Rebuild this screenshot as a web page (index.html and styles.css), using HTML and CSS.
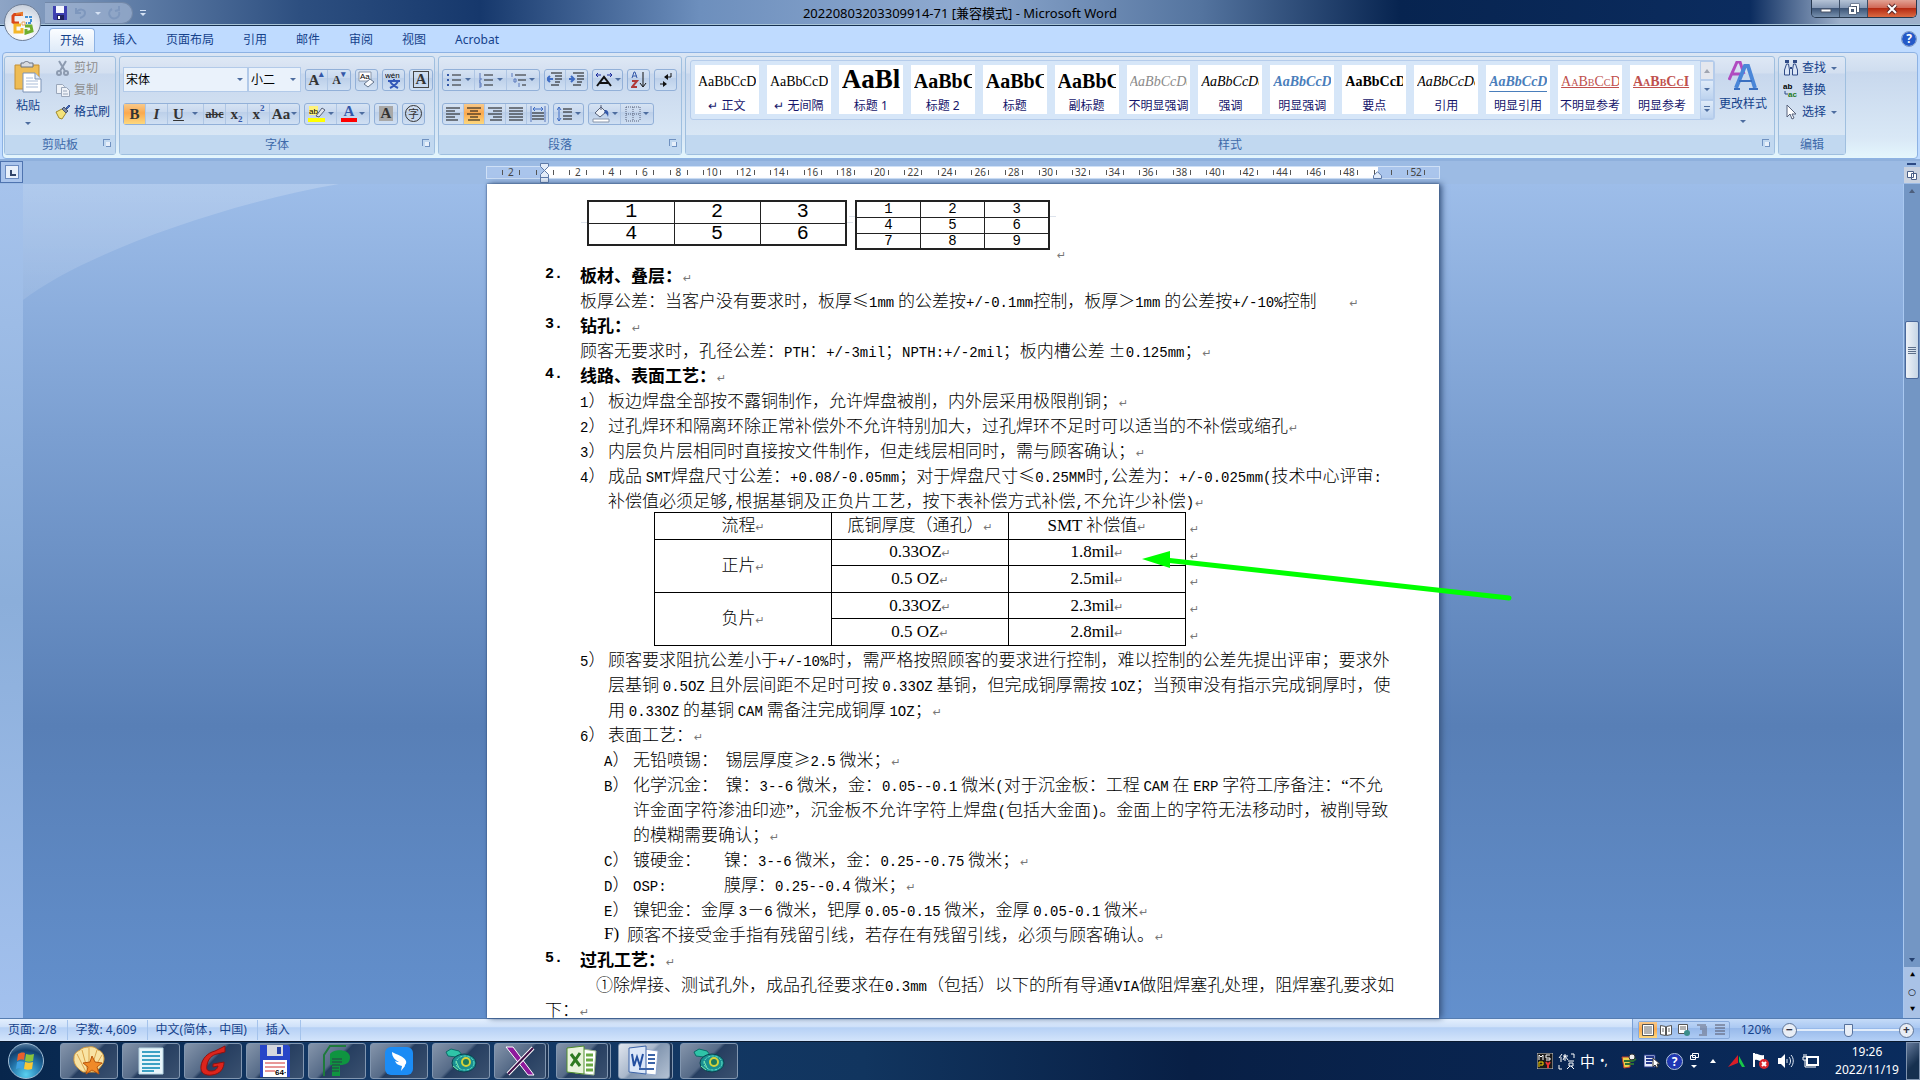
FILE: index.html
```html
<!DOCTYPE html>
<html lang="zh-CN">
<head>
  <meta charset="UTF-8">
  <meta name="viewport" content="width=device-width, initial-scale=1.0">
  <title>20220803203309914-71 [兼容模式] - Microsoft Word</title>
  <link rel="stylesheet" href="styles.css">
</head>
<body>
  <header class="titlebar">
    <div class="quick-access">
      <button class="qat-button" aria-label="保存">
        <svg width="14" height="14" viewBox="0 0 14 14"><path d="M0 0h14v14H1l-1-1z" fill="#3d3fb0"/><path d="M3 0h8v7H3z" fill="#f4f6ff"/><path d="M4 9h7v5H4z" fill="#20225c"/><path d="M5 10h2v3H5z" fill="#fff"/></svg>
      </button>
      <button class="qat-button" aria-label="撤消">
        <svg width="14" height="14" viewBox="0 0 14 14" fill="none" stroke="#7e97bd" stroke-width="2"><path d="M2 2v5h5M2 7c3-5 9-4 9 0 0 3-2 4-5 5"/></svg>
      </button>
      <span class="arrow light"></span>
      <button class="qat-button" aria-label="重复">
        <svg width="14" height="14" viewBox="0 0 14 14" fill="none" stroke="#7e97bd" stroke-width="2"><path d="M4 3a5 5 0 1 0 7 3M7 5l4-1V0"/></svg>
      </button>
    </div>
    <span class="qat-more"><i></i><span class="arrow light"></span></span>
    <h1 class="title">20220803203309914-71 [兼容模式] - Microsoft Word</h1>
    <div class="window-buttons">
      <button class="win-min" aria-label="最小化"><svg width="12" height="12" viewBox="0 0 12 12"><path d="M1 6h10v3H1z" fill="#fff" stroke="#4a5568"/></svg></button>
      <button class="win-max" aria-label="还原"><svg width="12" height="12" viewBox="0 0 12 12" fill="none" stroke="#4a5568" stroke-width="3"><path d="M4 3V2h6v6H9M2 5h5v5H2z"/><path d="M4 3V2h6v6H9M2 5h5v5H2z" stroke="#fff" stroke-width="2"/></svg></button>
      <button class="win-close" aria-label="关闭"><svg width="12" height="12" viewBox="0 0 12 12"><path d="M2 2l8 8M10 2l-8 8" stroke="#5c2a2a" stroke-width="4"/><path d="M2 2l8 8M10 2l-8 8" stroke="#fff" stroke-width="2"/></svg></button>
    </div>
  </header>

  <button class="office-button" aria-label="Office 按钮">
    <svg width="24" height="24" viewBox="0 0 24 24" fill="none" stroke-width="3">
      <path d="M11 3.500H3.500L2 5v6l2 1h4" stroke="#d9471c"/><path d="M5 3l6-1v3" stroke="#e87a2c" stroke-width="2"/>
      <path d="M14 6h6v6h-5" stroke="#3f8fd4" stroke-width="2" stroke-dasharray="3 1"/>
      <path d="M10 14H4v7h7v-4" stroke="#f4b62a"/>
      <path d="M14 15h6l1 5-6 2v-4" stroke="#6fae2d"/>
      <path d="M11 11h3v3h-3z" fill="#fff" stroke="#e9a05a" stroke-width="1"/>
    </svg>
  </button>

  <nav class="tabs">
    <button class="tab active">开始</button>
    <button class="tab">插入</button>
    <button class="tab">页面布局</button>
    <button class="tab">引用</button>
    <button class="tab">邮件</button>
    <button class="tab">审阅</button>
    <button class="tab">视图</button>
    <button class="tab">Acrobat</button>
    <button class="help" aria-label="帮助">?</button>
  </nav>

  <section class="ribbon">
    <div class="group group-clipboard">
      <div class="group-body">
        <button class="big-button">
          <svg width="28" height="32" viewBox="0 0 28 32">
            <path d="M1 4h24v24H1z" fill="#eebc55" stroke="#c48f35"/>
            <path d="M7 2h3c0-2 5-2 5 0h4v4H7z" fill="#d8dbe0" stroke="#6b7280"/>
            <path d="M9 12h12l6 6v13H9z" fill="#fff" stroke="#7d93b5"/><path d="M21 12v6h6" fill="#dfe8f5" stroke="#7d93b5"/>
            <path d="M12 17h7M12 20h12M12 23h12M12 26h12" stroke="#a9bcd8"/>
          </svg>
          <span>粘贴</span>
          <span class="arrow"></span>
        </button>
        <div class="small-list">
          <button class="small-button disabled">
            <svg width="16" height="16" viewBox="0 0 16 16" fill="none" stroke="#8d9bb0" stroke-width="2"><path d="M4 1l6 10M11 1L5 11"/><circle cx="4" cy="13" r="2"/><circle cx="11" cy="13" r="2"/></svg>剪切
          </button>
          <button class="small-button disabled">
            <svg width="16" height="16" viewBox="0 0 16 16" fill="#eef2f8" stroke="#9aa7ba"><path d="M1.500 2.500h6l2 2v7h-8z"/><path d="M6.500 5.500h5l3 3v6h-8zM8 9h4M8 12h5"/></svg>复制
          </button>
          <button class="small-button">
            <svg width="16" height="16" viewBox="0 0 16 16"><path d="M1 8l6-3 4 4-4 6-3-1z" fill="#f3e27a" stroke="#a08a2c"/><path d="M7 5l2-2 4 4-2 2z" fill="#7d8aa5" stroke="#4a5670"/><path d="M11 4l3-3 1 1-3 3z" fill="#4a72c4" stroke="#35549a"/></svg>格式刷
          </button>
        </div>
      </div>
      <div class="group-label">剪贴板<i class="launcher"></i></div>
    </div>

    <div class="group group-font">
      <div class="group-body rows">
        <div class="row">
          <div class="combos">
            <span class="combo combo-font"><select aria-label="字体"><option>宋体</option></select></span>
            <span class="combo combo-size"><select aria-label="字号"><option>小二</option></select></span>
          </div>
          <div class="buttons">
            <button class="tool serif" aria-label="增大字体">A<sup>▴</sup></button>
            <button class="tool serif small" aria-label="缩小字体">A<sup>▾</sup></button>
          </div>
          <div class="buttons">
            <button class="tool" aria-label="清除格式"><svg width="18" height="18" viewBox="0 0 18 18"><path d="M1 1h12v9H1z" fill="#fff" stroke="#8895aa"/><text x="2" y="8" class="icon-text">Aa</text><path d="M6 13l6-5 4 3-6 5z" fill="#f6f8fc" stroke="#64748b"/></svg></button>
          </div>
          <div class="buttons">
            <button class="tool" aria-label="拼音指南"><svg width="18" height="18" viewBox="0 0 18 18"><text x="0" y="7" class="icon-text">wén</text><path d="M3 10h12M9 8v2M5 10c1 3 4 5 8 7M13 10c-1 3-4 5-8 7" fill="none" stroke="#3458b8" stroke-width="2"/></svg></button>
          </div>
          <div class="buttons">
            <button class="tool serif" aria-label="字符边框"><span class="boxed">A</span></button>
          </div>
        </div>
        <div class="row">
          <div class="buttons">
            <button class="tool serif pressed" aria-label="加粗">B</button>
            <button class="tool serif" aria-label="倾斜"><em>I</em></button>
            <button class="tool serif wide" aria-label="下划线"><u>U</u><span class="arrow"></span></button>
            <button class="tool serif small" aria-label="删除线"><s>abc</s></button>
            <button class="tool serif" aria-label="下标">x<sub>2</sub></button>
            <button class="tool serif" aria-label="上标">x<sup>2</sup></button>
            <button class="tool serif medium" aria-label="更改大小写">Aa<span class="arrow"></span></button>
          </div>
          <div class="buttons">
            <button class="tool half" aria-label="突出显示"><svg width="18" height="18" viewBox="0 0 18 18"><path d="M1 1h9v9H1z" fill="#fff27a"/><text x="1" y="9" class="icon-text">ab</text><path d="M8 11l6-8 3 2-6 7z" fill="#dfe4ec" stroke="#56617a"/><path d="M0 13h17v4H0z" fill="#ff0"/></svg><span class="arrow"></span></button>
            <button class="tool serif half" aria-label="字体颜色"><span class="font-color">A</span><span class="arrow"></span></button>
          </div>
          <div class="buttons">
            <button class="tool serif" aria-label="字符底纹"><span class="shaded">A</span></button>
          </div>
          <div class="buttons">
            <button class="tool" aria-label="带圈字符"><span class="circled">字</span></button>
          </div>
        </div>
      </div>
      <div class="group-label">字体<i class="launcher"></i></div>
    </div>

    <div class="group group-paragraph">
      <div class="group-body rows">
        <div class="row">
          <div class="buttons">
            <button class="tool half" aria-label="项目符号"><svg width="16" height="16" viewBox="0 0 16 16"><path d="M5 3h9M5 8h9M5 13h9" stroke="#222"/><path d="M0 2h2v2H0zM0 7h2v2H0zM0 12h2v2H0z" fill="#3458a8"/></svg><span class="arrow"></span></button>
            <button class="tool half" aria-label="编号"><svg width="16" height="16" viewBox="0 0 16 16"><path d="M5 3h9M5 8h9M5 13h9" stroke="#222"/><path d="M1 1v4M0 6h2v2H0v2h2M0 11h2v4H0M0 13h2" stroke="#5a78bc" fill="none"/></svg><span class="arrow"></span></button>
            <button class="tool half" aria-label="多级列表"><svg width="16" height="16" viewBox="0 0 16 16"><path d="M4 3h11M7 8h8M11 13h4" stroke="#222"/><path d="M1 1v4M3 7h2v3H3zM8 11v4" stroke="#5a78bc" fill="none"/></svg><span class="arrow"></span></button>
          </div>
          <div class="buttons">
            <button class="tool" aria-label="减少缩进量"><svg width="16" height="16" viewBox="0 0 16 16"><path d="M4 1h11M8 4h7M8 7h7M8 10h5M4 13h8" stroke="#111"/><path d="M6 7H1M3 4L0 7l3 3" stroke="#3f6cc4" fill="none" stroke-width="2"/></svg></button>
            <button class="tool" aria-label="增加缩进量"><svg width="16" height="16" viewBox="0 0 16 16"><path d="M4 1h11M8 4h7M8 7h7M8 10h5M4 13h8" stroke="#111"/><path d="M0 7h4M2 4l3 3-3 3" stroke="#3f6cc4" fill="none" stroke-width="2"/></svg></button>
          </div>
          <div class="buttons">
            <button class="tool asian" aria-label="中文版式"><svg width="18" height="16" viewBox="0 0 18 16"><path d="M2 14L9 5l7 9M5 11h8" stroke="#111" stroke-width="2" fill="none"/><path d="M1 3h5M3 1L1 3l2 2M12 3h5M15 1l2 2-2 2" stroke="#1a2a9c" fill="none"/></svg><span class="arrow"></span></button>
          </div>
          <div class="buttons">
            <button class="tool" aria-label="排序"><svg width="16" height="18" viewBox="0 0 16 18"><path d="M1 7l2-6h1l2 6M2 5h4" stroke="#3458a8" fill="none"/><path d="M1 10h5l-5 6h5" stroke="#b03a3a" fill="none" stroke-width="2"/><path d="M12 1v14M9 12l3 4 3-4" stroke="#111" fill="none"/></svg></button>
          </div>
          <div class="buttons">
            <button class="tool" aria-label="显示编辑标记"><svg width="16" height="16" viewBox="0 0 16 16"><path d="M13 1v4H7" stroke="#111" fill="none"/><path d="M10 2v6L6 5zM5 9v6l4-3z" fill="#111"/><path d="M2 12h4" stroke="#111"/></svg></button>
          </div>
        </div>
        <div class="row">
          <div class="buttons">
            <button class="tool" aria-label="左对齐"><svg width="16" height="16" viewBox="0 0 16 16"><path d="M1 2h14M1 5h9M1 8h14M1 11h9M1 14h12" stroke="#111"/></svg></button>
            <button class="tool pressed" aria-label="居中"><svg width="16" height="16" viewBox="0 0 16 16"><path d="M1 2h14M4 5h8M1 8h14M4 11h8M2 14h12" stroke="#111"/></svg></button>
            <button class="tool" aria-label="右对齐"><svg width="16" height="16" viewBox="0 0 16 16"><path d="M1 2h14M6 5h9M1 8h14M6 11h9M3 14h12" stroke="#111"/></svg></button>
            <button class="tool" aria-label="两端对齐"><svg width="16" height="16" viewBox="0 0 16 16"><path d="M1 2h14M1 5h14M1 8h14M1 11h14M1 14h14" stroke="#111"/></svg></button>
            <button class="tool" aria-label="分散对齐"><svg width="16" height="16" viewBox="0 0 16 16"><path d="M1 0v16M15 0v16" stroke="#5a78bc"/><path d="M3 3h10M5 1L3 3l2 2M11 1l2 2-2 2" stroke="#3f6cc4" fill="none"/><path d="M2 7h12M2 10h12M2 13h12" stroke="#111"/></svg></button>
          </div>
          <div class="buttons">
            <button class="tool asian" aria-label="行距"><svg width="16" height="16" viewBox="0 0 16 16"><path d="M6 3h9M6 6h9M6 10h9M6 13h9" stroke="#111"/><path d="M2 1v14M0 4l2-3 2 3M0 12l2 3 2-3" stroke="#3f6cc4" fill="none"/></svg><span class="arrow"></span></button>
          </div>
          <div class="buttons">
            <button class="tool half" aria-label="底纹"><svg width="18" height="18" viewBox="0 0 18 18"><path d="M3 8l6-6 5 5-6 5z" fill="#eef2f8" stroke="#56617a"/><path d="M9 5V0" stroke="#56617a"/><path d="M13 5c3 0 4 2 3 7-1-3-2-4-4-4z" fill="#3458a8"/><path d="M1 14h16v3H1z" fill="#fff" stroke="#8895aa"/></svg><span class="arrow"></span></button>
            <button class="tool half" aria-label="边框"><svg width="16" height="16" viewBox="0 0 16 16"><path d="M1 1h14M1 8h14M1 1v14M8 1v14M15 1v14M1 15h14" stroke="#56617a" stroke-dasharray="1 1" fill="none"/></svg><span class="arrow"></span></button>
          </div>
        </div>
      </div>
      <div class="group-label">段落<i class="launcher"></i></div>
    </div>

    <div class="group group-styles">
      <div class="group-body styles-body">
        <div class="gallery">
          <button class="style"><span class="sample">AaBbCcDd</span><span>↵ 正文</span></button>
          <button class="style"><span class="sample">AaBbCcDd</span><span>↵ 无间隔</span></button>
          <button class="style"><span class="sample huge">AaBl</span><span>标题 1</span></button>
          <button class="style"><span class="sample large">AaBbC</span><span>标题 2</span></button>
          <button class="style"><span class="sample large">AaBbC</span><span>标题</span></button>
          <button class="style"><span class="sample large">AaBbC</span><span>副标题</span></button>
          <button class="style"><span class="sample italic gray">AaBbCcDd</span><span>不明显强调</span></button>
          <button class="style"><span class="sample italic">AaBbCcDd</span><span>强调</span></button>
          <button class="style"><span class="sample italic bold blue">AaBbCcDd</span><span>明显强调</span></button>
          <button class="style"><span class="sample bold">AaBbCcD</span><span>要点</span></button>
          <button class="style"><span class="sample italic">AaBbCcDd</span><span>引用</span></button>
          <button class="style"><span class="sample italic bold blue ruled">AaBbCcDd</span><span>明显引用</span></button>
          <button class="style"><span class="sample red caps">AaBbCcDd</span><span>不明显参考</span></button>
          <button class="style"><span class="sample red caps bold">AaBbCcI</span><span>明显参考</span></button>
          <div class="gallery-scroll">
            <button class="off" aria-label="向上"><span class="arrow up"></span></button>
            <button aria-label="向下"><span class="arrow"></span></button>
            <button aria-label="其他"><i></i><span class="arrow"></span></button>
          </div>
        </div>
        <button class="big-button change-styles">
          <svg width="30" height="30" viewBox="0 0 30 30">
            <path d="M1 19L9 1h3l4 12M4 13h8" fill="none" stroke="#b04cc0" stroke-width="3"/>
            <path d="M8 27L17 5h3l7 22" fill="none" stroke="#4a86d8" stroke-width="4"/><path d="M11 20h13M6 28h6M21 28h9" stroke="#3a6fc0" stroke-width="2"/>
          </svg>
          <span>更改样式</span>
          <span class="arrow"></span>
        </button>
      </div>
      <div class="group-label">样式<i class="launcher"></i></div>
    </div>

    <div class="group group-edit">
      <div class="group-body">
        <div class="small-list">
          <button class="small-button">
            <svg width="16" height="16" viewBox="0 0 16 16" fill="#dbe6f7" stroke="#2f4a86"><path d="M1.500 15v-5l2-6h2l1 6v5zM9.500 15v-5l1-6h2l2 6v5z"/><path d="M3 3V1h2v2M11 3V1h2v2M7 8h2" fill="none" stroke-width="2"/></svg>查找<span class="arrow"></span>
          </button>
          <button class="small-button">
            <svg width="16" height="16" viewBox="0 0 16 16"><text x="0" y="7" class="icon-text strong">ab</text><text x="5" y="15" class="icon-text strong green">ac</text><path d="M2 9v3h3" fill="none" stroke="#2f4a86"/></svg>替换
          </button>
          <button class="small-button">
            <svg width="16" height="16" viewBox="0 0 16 16"><path d="M4 1v12l3-3 2 5 2-1-2-4h4z" fill="#fff" stroke="#56617a"/></svg>选择<span class="arrow"></span>
          </button>
        </div>
      </div>
      <div class="group-label">编辑</div>
    </div>
  </section>

  <div class="ruler-row">
    <button class="tab-stop" aria-label="制表符"><i></i></button>
    <div class="ruler">
      <span>2</span><span></span><span>2</span><span>4</span><span>6</span><span>8</span><span>10</span><span>12</span><span>14</span><span>16</span><span>18</span><span>20</span><span>22</span><span>24</span><span>26</span><span>28</span><span>30</span><span>32</span><span>34</span><span>36</span><span>38</span><span>40</span><span>42</span><span>44</span><span>46</span><span>48</span><span></span><span>52</span>
      <svg class="indent-left" width="11" height="20" viewBox="0 0 11 20" fill="#e4edf9" stroke="#5f7ba8"><path d="M1.500.5h8v3l-4 4-4-4zM5.500 7.500l4 4v3h-8v-3zM1.500 14.500h8v5h-8z"/></svg>
      <svg class="indent-right" width="11" height="8" viewBox="0 0 11 8" fill="#e4edf9" stroke="#5f7ba8"><path d="M5.500.7l4 4v2.800h-8V4.700z"/></svg>
    </div>
    <div class="ruler-end"><i></i><button aria-label="标尺"><svg width="12" height="12" viewBox="0 0 12 12" fill="#fff" stroke="#4a5f86"><path d="M1.500 2.500h6v6h-6zM5.500 4.500h5v6h-5z"/></svg></button></div>
  </div>

  <main class="workspace">
    <div class="side-ruler"></div>
    <div class="canvas">
      <article class="page">
        <div class="figures">
          <div class="figure figure-large">
            <table>
              <tr><td>1</td><td>2</td><td>3</td></tr>
              <tr><td>4</td><td>5</td><td>6</td></tr>
            </table>
          </div>
          <div class="figure figure-small">
            <table>
              <tr><td>1</td><td>2</td><td>3</td></tr>
              <tr><td>4</td><td>5</td><td>6</td></tr>
              <tr><td>7</td><td>8</td><td>9</td></tr>
            </table>
          </div>
          <span class="mark"></span>
        </div>

        <h2 class="heading"><b>2.</b><span class="mark">板材、叠层：</span></h2>
        <p class="body-text mark">板厚公差：当客户没有要求时，板厚≤<code>1mm</code> 的公差按<code>+/-0.1mm</code>控制，板厚＞<code>1mm</code> 的公差按<code>+/-10%</code>控制<span class="tab-gap"></span></p>
        <h2 class="heading"><b>3.</b><span class="mark">钻孔：</span></h2>
        <p class="body-text mark">顾客无要求时，孔径公差：<code>PTH</code>：<code>+/-3mil</code>；<code>NPTH:+/-2mil</code>；板内槽公差 ±<code>0.125mm</code>；</p>
        <h2 class="heading"><b>4.</b><span class="mark">线路、表面工艺：</span></h2>
        <div class="item"><b><code>1</code>）</b><p class="mark">板边焊盘全部按不露铜制作，允许焊盘被削，内外层采用极限削铜；</p></div>
        <div class="item"><b><code>2</code>）</b><p class="mark">过孔焊环和隔离环除正常补偿外不允许特别加大，过孔焊环不足时可以适当的不补偿或缩孔</p></div>
        <div class="item"><b><code>3</code>）</b><p class="mark">内层负片层相同时直接按文件制作，但走线层相同时，需与顾客确认；</p></div>
        <div class="item"><b><code>4</code>）</b><p class="mark"><span class="full">成品 <code>SMT</code>焊盘尺寸公差：<code>+0.08/-0.05mm</code>；对于焊盘尺寸≤<code>0.25MM</code>时<code>,</code>公差为：<code>+/-0.025mm(</code>技术中心评审<code>:</code></span>补偿值必须足够<code>,</code>根据基铜及正负片工艺，按下表补偿方式补偿<code>,</code>不允许少补偿<code>)</code></p></div>

        <div class="spec">
          <table>
            <tr><td><span class="mark">流程</span></td><td><span class="mark">底铜厚度（通孔）</span></td><td><span class="mark">SMT 补偿值</span></td></tr>
            <tr><td rowspan="2"><span class="mark">正片</span></td><td><span class="mark">0.33OZ</span></td><td><span class="mark">1.8mil</span></td></tr>
            <tr><td><span class="mark">0.5 OZ</span></td><td><span class="mark">2.5mil</span></td></tr>
            <tr><td rowspan="2"><span class="mark">负片</span></td><td><span class="mark">0.33OZ</span></td><td><span class="mark">2.3mil</span></td></tr>
            <tr><td><span class="mark">0.5 OZ</span></td><td><span class="mark">2.8mil</span></td></tr>
          </table>
          <div class="row-marks"><i class="mark"></i><i class="mark"></i><i class="mark"></i><i class="mark"></i><i class="mark"></i></div>
        </div>

        <div class="item"><b><code>5</code>）</b><p class="mark"><span class="full">顾客要求阻抗公差小于<code>+/-10%</code>时，需严格按照顾客的要求进行控制，难以控制的公差先提出评审；要求外</span><span class="full">层基铜 <code>0.5OZ</code> 且外层间距不足时可按 <code>0.33OZ</code> 基铜，但完成铜厚需按 <code>1OZ</code>；当预审没有指示完成铜厚时，使</span>用 <code>0.33OZ</code> 的基铜 <code>CAM</code> 需备注完成铜厚 <code>1OZ</code>；</p></div>
        <div class="item"><b><code>6</code>）</b><p class="mark">表面工艺：</p></div>
        <div class="item sub"><b><code>A</code>）</b><p class="mark">无铅喷锡：&nbsp; 锡层厚度≥<code>2.5</code> 微米；</p></div>
        <div class="item sub"><b><code>B</code>）</b><p class="mark"><span class="full">化学沉金：&nbsp; 镍：<code>3--6</code> 微米，金：<code>0.05--0.1</code> 微米<code>(</code>对于沉金板：工程 <code>CAM</code> 在 <code>ERP</code> 字符工序备注：<q>“</q>不允</span><span class="full">许金面字符渗油印迹<q>”</q>，沉金板不允许字符上焊盘<code>(</code>包括大金面<code>)</code>。金面上的字符无法移动时，被削导致</span>的模糊需要确认；</p></div>
        <div class="item sub"><b><code>C</code>）</b><p class="mark"><span class="term">镀硬金：</span>镍：<code>3--6</code> 微米，金：<code>0.25--0.75</code> 微米；</p></div>
        <div class="item sub"><b><code>D</code>）</b><p class="mark"><span class="term"><code>OSP:</code></span>膜厚：<code>0.25--0.4</code> 微米；</p></div>
        <div class="item sub"><b><code>E</code>）</b><p class="mark">镍钯金：金厚 <code>3</code>－<code>6</code> 微米，钯厚 <code>0.05-0.15</code> 微米，金厚 <code>0.05-0.1</code> 微米</p></div>
        <div class="item sub last"><b>F)</b><p class="mark">顾客不接受金手指有残留引线，若存在有残留引线，必须与顾客确认。</p></div>
        <h2 class="heading"><b>5.</b><span class="mark">过孔工艺：</span></h2>
        <p class="mark"><span class="full closing">①除焊接、测试孔外，成品孔径要求在<code>0.3mm</code>（包括）以下的所有导通<code>VIA</code>做阻焊塞孔处理，阻焊塞孔要求如</span>下：</p>
      </article>
    </div>
    <div class="scrollbar">
      <span class="arrow up"></span>
      <div class="track"><div class="thumb"><i></i></div></div>
      <span class="arrow dark"></span>
      <button aria-label="上一页">⯅</button>
      <button aria-label="选择浏览对象">○</button>
      <button aria-label="下一页">⯆</button>
    </div>
    <svg class="callout" width="372" height="54" viewBox="0 0 372 54">
      <path d="M24 10L368 48" stroke="#0f0" stroke-width="5" stroke-linecap="round"/>
      <path d="M1 9L29 1v17z" fill="#0f0"/>
    </svg>
  </main>

  <footer class="statusbar">
    <span class="status-item">页面: 2/8</span>
    <span class="status-item">字数: 4,609</span>
    <span class="status-item">中文(简体，中国)</span>
    <span class="status-item">插入</span>
    <div class="view-controls">
      <div class="views">
        <button class="pressed" aria-label="页面视图"><svg width="12" height="12" viewBox="0 0 12 12"><path d="M.5.5h11v11H.5z" fill="#fff" stroke="#555"/><path d="M2 3h8M2 5h8M2 7h8M2 9h8" stroke="#666"/></svg></button>
        <button aria-label="阅读版式"><svg width="12" height="12" viewBox="0 0 12 12"><path d="M.5 1.500l5 1v9l-5-1zM11.500 1.500l-5 1v9l5-1z" fill="#fff" stroke="#555"/><path d="M2 5h2M2 7h2M8 5h2M8 7h2" stroke="#666"/></svg></button>
        <button aria-label="Web 版式"><svg width="12" height="12" viewBox="0 0 12 12"><path d="M.5.5h9v9h-9z" fill="#fff" stroke="#555"/><path d="M2 3h6M2 5h6" stroke="#666"/><circle cx="9" cy="9" r="3" fill="#3c8d8a"/></svg></button>
        <button aria-label="大纲视图"><svg width="12" height="12" viewBox="0 0 12 12"><path d="M1 1h9M4 3h7M4 5h7M6 7h5M6 9h5M3 11h8" stroke="#667"/></svg></button>
        <button aria-label="普通视图"><svg width="12" height="12" viewBox="0 0 12 12"><path d="M1 1h10M1 4h10M1 7h10M1 10h10" stroke="#556"/></svg></button>
      </div>
      <span class="zoom-level">120%</span>
      <button class="zoom-button" aria-label="缩小">−</button>
      <input class="zoom-slider" type="range" min="0" max="100" value="50" aria-label="显示比例">
      <button class="zoom-button" aria-label="放大">+</button>
    </div>
  </footer>

  <div class="taskbar">
    <button class="start" aria-label="开始">
      <svg width="22" height="22" viewBox="0 0 22 22"><path d="M3 4c2-1 4-2 7-1l-1 7c-3-1-5 0-7 1z" fill="#e8602c"/><path d="M11 4c3 1 5 1 8 0l-1 7c-3 1-5 1-8 0z" fill="#8ac43c"/><path d="M2 12c2-1 4-1 7 0l-1 7c-3-1-5-1-7 0z" fill="#3fa0e0"/><path d="M10 12c3 1 5 1 8 0l-1 7c-3 1-5 1-8 0z" fill="#fbc734"/></svg>
    </button>
    <button class="task" aria-label="Shell">
      <svg width="34" height="30" viewBox="0 0 34 30"><path d="M17 1c4-1 7 1 9 3 4 1 6 5 6 9 0 5-5 10-9 13H11C6 23 1 18 2 12c0-4 2-6 6-8 2-2 5-3 9-3z" fill="#f8e3a4" stroke="#d49a3c"/><path d="M14 26L5 8M16 26L10 4M17 26V2M18 26l7-22M20 26L30 9" stroke="#dba44c" fill="none"/><path d="M20 10l3 6 7 1-5 4 2 7-7-4-6 4 2-7-5-4 7-1z" fill="#f08a28" stroke="#b8560c"/></svg>
    </button>
    <button class="task" aria-label="文本">
      <svg width="26" height="30" viewBox="0 0 26 30"><path d="M1 2h24v26H1z" fill="#e8f5fb" stroke="#b7d5e2"/><path d="M4 6h18M4 10h18M4 14h18M4 18h18M4 22h18M4 25h12" stroke="#3ea1c4" stroke-width="2"/></svg>
    </button>
    <button class="task" aria-label="Genesis">
      <svg width="28" height="32" viewBox="0 0 28 32"><path d="M26 1L16 6C8 8 3 14 2 21c-1 7 4 10 11 9 8-1 12-6 12-13l-11 2v3l5-1c-1 4-4 5-7 5-4 0-5-2-4-6 1-6 5-10 10-11l8-2z" fill="#dc241c" stroke="#8e1210"/></svg>
    </button>
    <button class="task" aria-label="Disk">
      <svg width="30" height="32" viewBox="0 0 30 32"><path d="M0 0h28l2 2v30H0z" fill="#2746c8"/><path d="M7 0h16v11H7z" fill="#d5d8de"/><path d="M17 2h4v7h-4z" fill="#2340a8"/><path d="M3 15h24v17H3z" fill="#fff"/><path d="M5 18h20M5 22h20M5 26h10" stroke="#d03030"/><text x="15" y="30" class="icon-text strong">64·</text></svg>
    </button>
    <button class="task" aria-label="P">
      <svg width="32" height="32" viewBox="0 0 32 32"><path d="M3 31V10L9 1h16" fill="none" stroke="#1e7a3c" stroke-width="2"/><path d="M9 9c3-5 19-6 20 3 0 6-4 8-10 8v11h-8V20H9z" fill="#0f9440"/><path d="M11 14h10M11 17h10M11 20h8M11 23h7M11 26h7" stroke="#2a3c48"/></svg>
    </button>
    <button class="task" aria-label="钉钉">
      <svg width="28" height="28" viewBox="0 0 28 28"><rect width="28" height="28" rx="6" fill="#1b8cf5"/><path d="M7 5c5 3 12 4 14 9 1 3-2 4-1 5l-4 5 1-5c-5-1-6-3-7-5 2 1 3 1 4 1-4-2-7-5-7-10z" fill="#fff"/></svg>
    </button>
    <button class="task" aria-label="Eye">
      <svg width="32" height="26" viewBox="0 0 32 26"><path d="M1 4l5-3 8 2 3 4-6 2-8-1z" fill="#2fc4a8" stroke="#0d6b68"/><ellipse cx="19" cy="15" rx="12" ry="9" fill="#1a8f90" stroke="#0b4450"/><ellipse cx="20" cy="15" rx="9" ry="7" fill="none" stroke="#5fe0c8" stroke-dasharray="3 1"/><circle cx="21" cy="14" r="4" fill="#1c7a5c" stroke="#d4d23a" stroke-width="2"/><path d="M8 18l5 4M11 13l3 7" stroke="#7fe8a8"/></svg>
    </button>
    <button class="task stacked" aria-label="X">
      <svg width="30" height="30" viewBox="0 0 30 30"><path d="M1 1h7l21 28h-6z" fill="#8e1a9c" stroke="#fff"/><path d="M28 2L3 28" stroke="#fff" stroke-width="4"/><path d="M28 2L3 28" stroke="#401048" stroke-width="2"/></svg>
    </button>
    <button class="task stacked" aria-label="Excel">
      <svg width="32" height="32" viewBox="0 0 32 32"><path d="M10 3l20 3-2 24-19-2z" fill="#fff" stroke="#9ab88c"/><path d="M1 3l17-2v28L1 27z" fill="#e8f3dc" stroke="#4e8c2c"/><path d="M5 9l9 12M14 8L5 21" stroke="#2e7a22" stroke-width="3"/><path d="M20 10h7M20 15h7M20 20h7M20 25h7" stroke="#6aaa44" stroke-width="3"/></svg>
    </button>
    <button class="task stacked current" aria-label="Word">
      <svg width="32" height="32" viewBox="0 0 32 32"><path d="M10 3l20 3-2 24-19-2z" fill="#fff" stroke="#93a8cc"/><path d="M1 3l17-2v28L1 27z" fill="#dbe7f8" stroke="#3c64a8"/><path d="M4 9l2 12 3-9 3 9 3-12" fill="none" stroke="#2450a0" stroke-width="2"/><path d="M20 10h7M20 14h7M20 18h7M11 24h15" stroke="#3c64a8" stroke-width="2"/></svg>
    </button>
    <button class="task" aria-label="Eye 2">
      <svg width="32" height="26" viewBox="0 0 32 26"><path d="M1 4l5-3 8 2 3 4-6 2-8-1z" fill="#2fc4a8" stroke="#0d6b68"/><ellipse cx="19" cy="15" rx="12" ry="9" fill="#1a8f90" stroke="#0b4450"/><ellipse cx="20" cy="15" rx="9" ry="7" fill="none" stroke="#5fe0c8" stroke-dasharray="3 1"/><circle cx="21" cy="14" r="4" fill="#1c7a5c" stroke="#d4d23a" stroke-width="2"/><path d="M8 18l5 4M11 13l3 7" stroke="#7fe8a8"/></svg>
    </button>

    <div class="tray">
      <div class="ime-bar">
        <svg width="16" height="16" viewBox="0 0 16 16"><path d="M0 0h16v16H0z" fill="#1a1a1a" stroke="#ccc"/><path d="M2 7V2l2 2 2-2v5M13 2H9v3h4v2H9" stroke="#fff" fill="none"/><path d="M2 14V9h4v3H3" stroke="#ffd800" fill="none"/><path d="M9 9l2 3 2-3M11 12v3" stroke="#e33" fill="none" stroke-width="2"/></svg>
        <svg width="17" height="17" viewBox="0 0 17 17" fill="none" stroke="#fff"><path d="M4 1L1 5M3 4v5M5 3h5M7 1v7M7 3L5 7M7 3l3 4M1 12v4h3M16 5V1h-3M10 8h6M11 10h4v3h-4zM9 16l3-3M16 16l-3-3"/></svg>
        <span class="ime">中</span>
        <span class="ime-dots">•,</span>
      </div>
      <svg width="16" height="16" viewBox="0 0 16 16"><path d="M1 4h8v10l-6 1z" fill="#e8d24a" stroke="#c23c2c"/><circle cx="11" cy="4" r="3" fill="#eee" stroke="#333"/><path d="M3 8h9l3-2M4 11h9" stroke="#2c6d34" stroke-width="2"/></svg>
      <svg width="16" height="16" viewBox="0 0 16 16"><path d="M0 2h11v12H0z" fill="#e8edf8" stroke="#24388c"/><path d="M2 4h8M2 7h8M2 10h6" stroke="#24388c" stroke-width="2"/><path d="M9 5v9l2-2 2 3 1-1-1-3h3z" fill="#fff" stroke="#333"/></svg>
      <span class="tray-help">?</span>
      <svg width="10" height="18" viewBox="0 0 10 18"><path d="M3.500 1.500h6v4h-6zM1.500 3.500h5v4h-5z" fill="none" stroke="#fff"/><path d="M2 13h6l-3 3z" fill="#fff"/></svg>
      <span class="arrow up white"></span>
      <svg width="18" height="14" viewBox="0 0 18 14"><path d="M1 13L11 1v8z" fill="#d81e28"/><path d="M12 2l6 11h-3l-3-5z" fill="#18c848"/></svg>
      <svg width="18" height="18" viewBox="0 0 18 18"><path d="M2 1v14" stroke="#fff" stroke-width="2"/><path d="M3 2c3-1 4 2 9 1v6c-5 1-6-2-9-1z" fill="#fff"/><circle cx="12" cy="12" r="5" fill="#d8262c"/><path d="M10 10l4 4M14 10l-4 4" stroke="#fff" stroke-width="2"/></svg>
      <svg width="18" height="16" viewBox="0 0 18 16"><path d="M1 5h3l4-4v14l-4-4H1z" fill="#fff"/><path d="M10 6v4M12 4c2 2 2 6 0 8M14 2c3 3 3 9 0 12" stroke="#dde6f2" fill="none"/></svg>
      <svg width="18" height="16" viewBox="0 0 18 16" fill="none" stroke="#fff"><path d="M5 4h11v8H5z" stroke-width="2"/><path d="M8 14h6M2 1v3M4 1v3M1 4h4v3H1zM3 7v7h5"/></svg>
      <div class="clock"><span>19:26</span><span>2022/11/19</span></div>
      <button class="show-desktop" aria-label="显示桌面"></button>
    </div>
  </div>
</body>
</html>
```

FILE: styles.css
```css
* {
  box-sizing: border-box;
}

body {
  display: flex;
  flex-direction: column;
  height: 100vh;
  margin: 0;
  overflow: hidden;
  background: #bfdbff;
  color: #15428b;
  font-family: "Noto Sans", "Noto Sans CJK SC", sans-serif;
  font-size: 12px;
  line-height: 16px;
}

button {
  margin: 0;
  padding: 0;
  border: none;
  background: none;
  color: inherit;
  font: inherit;
}

svg {
  flex: none;
}

.arrow {
  flex: none;
  width: 0;
  height: 0;
  border: 3px solid transparent;
  border-top-color: #4d6d9f;
  border-bottom: none;
}

.arrow.up {
  border-top: none;
  border-bottom: 4px solid #4d5f7d;
}

.arrow.light {
  border-top-color: #d5e2f4;
}

.arrow.white {
  border-bottom-color: #fff;
}

/* title bar */
.titlebar {
  display: flex;
  flex: none;
  height: 26px;
  border-bottom: 1px solid #16304f;
  background: linear-gradient(90deg, #8ea5c6 0, #5d7ba5 140px, #2d4f80 300px, #16386c 480px, #6d8fbd 700px, #8faad0 960px, #54749f 1200px, #072450 1400px, #0b2c5f 1750px, #9db0cb 1840px);
  box-shadow: inset 0 -1px #a8c4d8;
}

.quick-access {
  display: flex;
  align-items: center;
  gap: 7px;
  width: 88px;
  height: 22px;
  margin: 2px 0 0 45px;
  padding-left: 8px;
  border: 1px solid #7288a8;
  border-left: none;
  border-radius: 0 11px 11px 0;
  background: rgba(170, 188, 216, 0.6);
}

.qat-button {
  display: flex;
}

.qat-more {
  display: flex;
  flex-direction: column;
  align-items: center;
  justify-content: center;
  gap: 2px;
  width: 20px;
}

.qat-more i {
  width: 6px;
  height: 1px;
  background: #d5e2f4;
}

.title {
  flex: 1;
  margin: 0;
  padding-right: 44px;
  color: #000;
  font-size: 13px;
  font-weight: 400;
  line-height: 26px;
  text-align: center;
}

.window-buttons {
  display: flex;
  height: 18px;
  margin-right: 3px;
  border: 1px solid #26384f;
  border-top: none;
  border-radius: 0 0 5px 5px;
  overflow: hidden;
}

.window-buttons button {
  display: flex;
  align-items: center;
  justify-content: center;
  width: 28px;
  border-right: 1px solid #3b4d66;
  background: linear-gradient(#b5c3d6, #8296b3 50%, #3d5577 50%, #7790ae);
}

.window-buttons .win-close {
  width: 48px;
  border: none;
  background: linear-gradient(#e2a294, #cf6350 50%, #b52b12 50%, #dc6a42);
}

.office-button {
  position: absolute;
  top: 4px;
  left: 4px;
  display: flex;
  align-items: center;
  justify-content: center;
  width: 37px;
  height: 37px;
  border: 1px solid #6f7f97;
  border-radius: 50%;
  background: radial-gradient(circle at 50% 80%, #fff 0, #e9edf3 50%, #b9c3d2 100%);
}

/* tabs */
.tabs {
  display: flex;
  flex: none;
  align-items: flex-end;
  gap: 7px;
  height: 26px;
  padding: 0 4px 0 49px;
  background: #bfdbff;
}

.tab {
  height: 25px;
  padding: 0 11px;
}

.tab.active {
  margin-bottom: -1px;
  border: 1px solid #8db2e3;
  border-bottom: none;
  border-radius: 4px 4px 0 0;
  padding: 0 10px;
  background: linear-gradient(#fbfdff, #dce9f8);
}

.help {
  width: 14px;
  height: 14px;
  margin: 0 0 6px auto;
  border-radius: 50%;
  outline: 1px solid #7c97c4;
  background: #2459c8;
  color: #fff;
  font-weight: 700;
  line-height: 14px;
}

/* ribbon */
.ribbon {
  display: flex;
  flex: none;
  gap: 3px;
  height: 107px;
  margin: 0 2px;
  padding: 3px 1px;
  border: 1px solid #8db2e3;
  border-radius: 4px;
  background: linear-gradient(#dbe6f4 0, #cfddef 18px, #c8d8ed 19px, #d9e8f6 85px, #e4f6fd 100%);
}

.group {
  display: flex;
  flex-direction: column;
  border: 1px solid #9fbfdf;
  border-radius: 3px;
  background: linear-gradient(#dee8f5 0, #d3dff0 16px, #c7d7ed 17px, #d9e7f5 80px);
}

.group-body {
  display: flex;
  flex: 1;
}

.group-label {
  position: relative;
  height: 19px;
  background: #c1d8f0;
  color: #3e6aaa;
  line-height: 20px;
  text-align: center;
}

.launcher {
  position: absolute;
  top: 4px;
  right: 5px;
  width: 7px;
  height: 7px;
  border: 1px solid #6f91c0;
  border-right: none;
  border-bottom: none;
}

.launcher::after {
  content: "";
  display: block;
  width: 4px;
  height: 4px;
  margin: 2px;
  border: 1px solid #6f91c0;
  border-top: none;
  border-left: none;
  background: #e6effa;
}

.group-clipboard {
  width: 112px;
}

.group-font {
  width: 316px;
}

.group-paragraph {
  width: 244px;
}

.group-styles {
  flex: 1;
  max-width: 1090px;
}

.group-edit {
  width: 68px;
}

.big-button {
  display: flex;
  flex: none;
  flex-direction: column;
  align-items: center;
  width: 46px;
  padding-top: 4px;
}

.big-button span:not(.arrow) {
  margin: 5px 0 8px;
}

.small-list {
  display: flex;
  flex-direction: column;
  gap: 6px;
  padding: 3px 0 0 4px;
}

.small-button {
  display: flex;
  align-items: center;
  gap: 3px;
}

.small-button .arrow {
  margin-left: 2px;
}

.small-button.disabled {
  color: #8d8d8d;
}

.rows {
  flex-direction: column;
  gap: 9px;
  padding: 10px 3px 0;
}

.row {
  display: flex;
  align-items: center;
  gap: 4px;
  height: 25px;
}

.combos {
  display: flex;
}

.combo {
  display: flex;
  align-items: center;
  height: 25px;
  border: 1px solid #b2cae9;
  background: #eaf2fb;
}

.combo::after {
  content: "";
  margin-right: 4px;
  border: 3px solid transparent;
  border-top-color: #4d6d9f;
  border-bottom: none;
}

.combo select {
  flex: 1;
  min-width: 0;
  padding: 0 2px;
  border: none;
  appearance: none;
  background: none;
  color: #000;
  font: inherit;
}

.combo-font {
  width: 125px;
}

.combo-size {
  width: 53px;
}

.buttons {
  display: flex;
  height: 22px;
  border: 1px solid #92b0d8;
  border-radius: 3px;
  background: linear-gradient(#d6e3f3, #c8d8ee 40%, #bccfe9 41%, #d0e0f3);
}

.tool {
  display: flex;
  align-items: center;
  justify-content: center;
  gap: 2px;
  min-width: 21px;
  border-right: 1px solid #afc6e4;
  color: #333;
}

.tool:last-child {
  border-right: none;
}

.tool.serif {
  min-width: 22px;
  font-family: "Liberation Serif", serif;
  font-size: 15px;
  font-weight: 700;
}

.tool.small {
  font-size: 12px;
}

.tool.wide {
  width: 36px;
  gap: 8px;
}

.tool.medium {
  width: 29px;
  gap: 1px;
}

.tool.half {
  width: 32px;
}

.tool.asian {
  width: 29px;
}

.tool sup,
.tool sub {
  color: #3458a8;
  font-size: 9px;
  line-height: 9px;
}

.tool sup {
  align-self: flex-start;
}

.tool sub {
  align-self: flex-end;
}

.tool.serif sup,
.tool.serif sub {
  margin-left: -2px;
}

.pressed {
  background: linear-gradient(#f8c98a, #fba94e 45%, #fdd87e);
}

.boxed {
  width: 16px;
  border: 1px solid #444;
  line-height: 15px;
}

.shaded {
  width: 14px;
  background: #a8a8a8;
  line-height: 15px;
}

.circled {
  width: 17px;
  border: 1px solid #333;
  border-radius: 50%;
  font-size: 11px;
  line-height: 15px;
}

.font-color {
  width: 16px;
  border-bottom: 4px solid #f00;
  color: #3458a8;
  line-height: 13px;
}

.icon-text {
  font-family: "Liberation Sans", sans-serif;
  font-size: 8px;
}

.icon-text.strong {
  font-weight: 700;
}

.icon-text.green {
  fill: #1e7a22;
}

/* style gallery */
.styles-body {
  align-items: flex-start;
  padding: 3px 3px 0 4px;
}

.gallery {
  display: flex;
  flex: 1;
  gap: 8px;
  min-width: 0;
  height: 60px;
  padding: 4px 0 0 4px;
  border: 1px solid #b5cceb;
  border-radius: 3px;
  background: #d6e6f8;
}

.style {
  display: flex;
  flex: 1;
  flex-direction: column;
  align-items: center;
  justify-content: space-between;
  min-width: 0;
  height: 49px;
  background: #fff;
  color: #15156b;
  white-space: nowrap;
}

.style .sample {
  align-self: stretch;
  height: 32px;
  margin: 0 3px;
  overflow: hidden;
  color: #000;
  font-family: "Liberation Serif", serif;
  font-size: 14px;
  line-height: 33px;
  text-align: left;
}

.style .huge {
  font-size: 27px;
  font-weight: 700;
  line-height: 29px;
}

.style .large {
  font-size: 20px;
  font-weight: 700;
}

.style .bold {
  font-weight: 700;
}

.style .italic {
  font-style: italic;
}

.style .gray {
  color: #8a8a8a;
}

.style .blue {
  color: #4a7ebb;
}

.style .red {
  color: #c0504d;
  text-decoration: underline;
}

.style .caps {
  font-variant: small-caps;
}

.style .ruled {
  text-decoration: underline;
  text-underline-offset: 5px;
}

.gallery-scroll {
  display: flex;
  flex: none;
  flex-direction: column;
  width: 14px;
  margin: -4px 0 0 -2px;
}

.gallery-scroll button {
  display: flex;
  flex: 1;
  flex-direction: column;
  align-items: center;
  justify-content: center;
  gap: 2px;
  border: 1px solid #b5cceb;
  background: linear-gradient(#dfebf9, #bdd3ef);
}

.gallery-scroll .off {
  background: #e4e7ee;
}

.gallery-scroll .off .arrow {
  border-bottom-color: #a0a5b0;
}

.gallery-scroll i {
  width: 6px;
  height: 1px;
  background: #4d6d9f;
}

.change-styles {
  width: 56px;
  padding-top: 1px;
}

/* horizontal ruler */
.ruler-row {
  display: flex;
  flex: none;
  justify-content: space-between;
  height: 25px;
  border-top: 2px solid #8fb0dc;
  background: #9cbbe4;
}

.tab-stop {
  width: 23px;
  height: 22px;
  border: 1px solid #4f74b0;
  background: #a9c4ec;
}

.tab-stop i {
  display: block;
  width: 14px;
  height: 14px;
  margin: 0 auto;
  border: 1px solid #6b8bc0;
  background: linear-gradient(#33466b, #33466b) 4px 4px / 2px 6px no-repeat, linear-gradient(#33466b, #33466b) 4px 8px / 6px 2px no-repeat #e8f0fb;
}

.ruler {
  position: relative;
  display: flex;
  align-self: flex-start;
  width: 954px;
  height: 13px;
  margin-top: 5px;
  padding: 0 6px 0 7px;
  border: 1px solid #cfe0f6;
  background: linear-gradient(90deg, #aac5ec 58px, #fff 58px, #fff 891px, #aac5ec 891px);
}

.ruler span {
  flex: 1;
  background: linear-gradient(#555, #555) 8px 3px / 1px 5px no-repeat, linear-gradient(#555, #555) 25px 3px / 1px 5px no-repeat;
  color: #444;
  font-size: 10px;
  line-height: 11px;
  text-align: center;
}

.indent-left {
  position: absolute;
  top: -4px;
  left: 52px;
}

.indent-right {
  position: absolute;
  top: 4px;
  left: 885px;
}

.ruler-end {
  display: flex;
  flex-direction: column;
  align-items: center;
  gap: 2px;
  width: 17px;
  padding-top: 2px;
}

.ruler-end i {
  width: 9px;
  height: 2px;
  background: #2c4a84;
}

.ruler-end button {
  display: flex;
  align-items: center;
  justify-content: center;
  width: 16px;
  height: 16px;
  background: #c9d2e0;
}

/* document area */
.workspace {
  position: relative;
  display: flex;
  flex: 1;
  min-height: 0;
  background: linear-gradient(#9dbde9 0, #7b9fd1 30%, #587fb6 65%, #6390cd 100%);
}

.workspace::before {
  content: "";
  position: absolute;
  top: 0;
  left: 23px;
  width: 320px;
  height: 116px;
  background: linear-gradient(rgba(255, 255, 255, 0.2), rgba(255, 255, 255, 0.1));
  clip-path: path("M0 0H316C200 20 60 70 0 116z");
}

.side-ruler {
  width: 23px;
  background: linear-gradient(#a6c3ec, #8baeda 50%, #a3c1ee);
}

.canvas {
  display: flex;
  flex: 1;
  justify-content: center;
}

.page {
  width: 952px;
  padding: 16px 59px 0 58px;
  background: #fff;
  box-shadow: 3px 0 6px #3d5a85, 0 0 2px #2b4470;
  color: #000;
  font-family: "Noto Sans CJK SC", sans-serif;
  font-size: 17px;
  font-weight: 300;
  line-height: 25px;
  overflow: hidden;
}

.page p,
.page h2 {
  margin: 0;
}

.page h2 {
  font-size: 17px;
}

code {
  font-family: "Liberation Mono", monospace;
  font-size: 14px;
  line-height: 0;
}

q {
  font-family: "Liberation Serif", serif;
  line-height: 0;
  quotes: none;
}

.mark::after {
  content: "↵";
  margin-left: 1px;
  color: #777;
  font-family: "DejaVu Sans", sans-serif;
  font-size: 11px;
  font-weight: 400;
  line-height: 0;
}

.figures {
  display: flex;
  align-items: flex-start;
  height: 62px;
  padding-left: 36px;
}

.figures .mark {
  align-self: flex-end;
  line-height: 20px;
}

.figures table {
  border: 2px solid #222;
  border-collapse: collapse;
  background: #fff;
  table-layout: fixed;
}

.figures td {
  padding: 0;
  border: 1px solid #222;
  font-family: "Liberation Mono", monospace;
  text-align: center;
}

/* sheet grid lines show at the sides of each table */
.figure-large {
  margin-right: -4px;
  padding: 0 6px 6px;
  background: linear-gradient(#dde3ec, #dde3ec) 0 22px / 100% 1px no-repeat;
}

.figure-large table {
  width: 260px;
}

.figure-large td {
  height: 22px;
  font-size: 20px;
  line-height: 20px;
}

.figure-small {
  padding: 0 6px 6px;
  background: linear-gradient(#dde3ec, #dde3ec) 0 16px / 100% 1px no-repeat;
}

.figure-small table {
  width: 195px;
}

.figure-small td {
  height: 16px;
  font-size: 14px;
  line-height: 14px;
}

.heading {
  display: flex;
}

.heading b {
  width: 35px;
  font-family: "Liberation Mono", monospace;
  font-size: 15px;
}

.body-text {
  padding-left: 35px;
  white-space: nowrap;
}

.tab-gap {
  display: inline-block;
  width: 32px;
}

.item {
  display: flex;
  padding-left: 35px;
}

.item b {
  flex: none;
  width: 28px;
  font-weight: 300;
}

.item p {
  flex: 1;
  min-width: 0;
  white-space: nowrap;
}

.item.sub {
  padding-left: 59px;
}

.item.sub b {
  width: 29px;
}

.item.last b {
  width: 23px;
  font-family: "Liberation Serif", serif;
}

/* a line that fills the whole column */
.full {
  display: block;
  text-align-last: justify;
  white-space: nowrap;
}

.term {
  display: inline-block;
  width: 91px;
}

.closing {
  text-indent: 51px;
}

.spec {
  display: flex;
  padding-left: 109px;
}

.spec table {
  width: 532px;
  height: 134px;
  border-collapse: collapse;
  font-family: "Liberation Serif", "Noto Sans CJK SC", serif;
  table-layout: fixed;
}

.spec td {
  height: 26px;
  padding: 0;
  border: 1px solid #000;
  line-height: 24px;
  text-align: center;
}

.spec td .mark::after {
  margin-left: 0;
}

.row-marks {
  display: flex;
  flex-direction: column;
  justify-content: space-around;
  padding-left: 3px;
}

.row-marks i {
  font-style: normal;
}

.callout {
  position: absolute;
  top: 366px;
  left: calc(50% + 181px);
}

/* vertical scroll bar */
.scrollbar {
  display: flex;
  flex-direction: column;
  align-items: center;
  width: 17px;
  padding-top: 5px;
  border-left: 1px solid #a9c8f0;
  background: #7396c4;
}

.scrollbar .track {
  flex: 1;
  width: 100%;
  padding-top: 128px;
}

.scrollbar .thumb {
  display: flex;
  align-items: center;
  justify-content: center;
  width: 14px;
  height: 58px;
  margin: 0 auto;
  border: 1px solid #4a699c;
  border-radius: 2px;
  background: linear-gradient(90deg, #eef2f7, #c6d6e6);
}

.thumb i {
  width: 8px;
  height: 7px;
  background: repeating-linear-gradient(#5c6f8a 0 1px, transparent 1px 2px);
}

.scrollbar .dark {
  margin-bottom: 5px;
  border-top: 4px solid #24406f;
}

.scrollbar button {
  width: 16px;
  height: 17px;
  background: #a9c2e6;
  color: #000;
  font-family: "DejaVu Sans", sans-serif;
  font-size: 9px;
  line-height: 17px;
}

/* status bar */
.statusbar {
  display: flex;
  flex: none;
  align-items: center;
  height: 23px;
  border-top: 1px solid #567db1;
  background: linear-gradient(#e3effd 0, #cfe1f9 35%, #b6d1f5 40%, #d3e4fb 100%);
}

.status-item {
  padding: 0 10px 0 8px;
  border-right: 1px solid #a4c3ec;
  line-height: 20px;
}

.view-controls {
  display: flex;
  align-items: center;
  height: 100%;
  margin-left: auto;
  padding: 0 6px 0 5px;
  border-left: 1px solid #7ba0d4;
  background: linear-gradient(#c5dbf8, #aac8f2 40%, #97b9ea 42%, #b4d0f6);
}

.views {
  display: flex;
  height: 18px;
  border: 1px solid #88aadb;
  border-radius: 2px;
}

.views button {
  display: flex;
  align-items: center;
  justify-content: center;
  width: 18px;
}

.zoom-level {
  width: 52px;
  text-align: center;
}

.zoom-button {
  width: 15px;
  height: 15px;
  border: 1px solid #5d7396;
  border-radius: 50%;
  background: #e8edf5;
  color: #334;
  font-weight: 700;
  line-height: 12px;
}

.zoom-slider {
  width: 102px;
  height: 16px;
  margin: 0;
  appearance: none;
  background: linear-gradient(#e2edfb, #e2edfb) 0 7px / 100% 2px no-repeat;
}

.zoom-slider::-webkit-slider-thumb {
  appearance: none;
  width: 9px;
  height: 13px;
  border: 1px solid #56719c;
  border-radius: 1px 1px 5px 5px;
  background: #e8eef7;
}

/* taskbar */
.taskbar {
  display: flex;
  flex: none;
  gap: 4px;
  height: 39px;
  padding: 1px 0 1px 8px;
  border-top: 1px solid #0a1a30;
  background: linear-gradient(90deg, #07264c, #143a68 20%, #11355f 45%, #081f45 62%, #0a2c5e 100%);
}

.start {
  display: flex;
  align-items: center;
  justify-content: center;
  width: 36px;
  height: 36px;
  margin-right: 12px;
  border: 1px solid #a3c0d8;
  border-radius: 50%;
  background: radial-gradient(circle at 50% 90%, #58d0f0 0, #2272a8 45%, #12406e 70%, #7fa3c0 100%);
}

.task {
  display: flex;
  align-items: center;
  justify-content: center;
  width: 58px;
  border: 1px solid #8196b0;
  border-radius: 3px;
  background: linear-gradient(135deg, #8595ab 0, #566b88 45%, #263e60 50%, #3a5170 100%);
}

.task.stacked {
  width: 52px;
  margin-right: 6px;
  box-shadow: 2px 0 #1d3454, 3px 0 #8196b0;
}

.task.current {
  background: linear-gradient(135deg, #dfe5ee 0, #aab8cb 45%, #8296b0 50%, #b3c1d3 100%);
}

.tray {
  display: flex;
  align-items: center;
  gap: 7px;
  margin-left: auto;
  color: #fff;
}

.ime-bar {
  display: flex;
  align-items: center;
  gap: 5px;
}

.ime {
  font-size: 15px;
}

.ime-dots {
  width: 14px;
}

.tray-help {
  width: 15px;
  height: 15px;
  border-radius: 50%;
  outline: 1px solid #b9c9ea;
  background: #2038b4;
  font-weight: 700;
  line-height: 15px;
  text-align: center;
}

.tray .arrow {
  margin: 0 4px;
}

.clock {
  display: flex;
  flex-direction: column;
  gap: 2px;
  width: 72px;
  margin-left: 4px;
  text-align: center;
}

.show-desktop {
  width: 14px;
  height: 38px;
  margin-left: -4px;
  border: 1px solid #7f93ae;
  background: linear-gradient(135deg, #64799a, #16304f 60%);
}
```
